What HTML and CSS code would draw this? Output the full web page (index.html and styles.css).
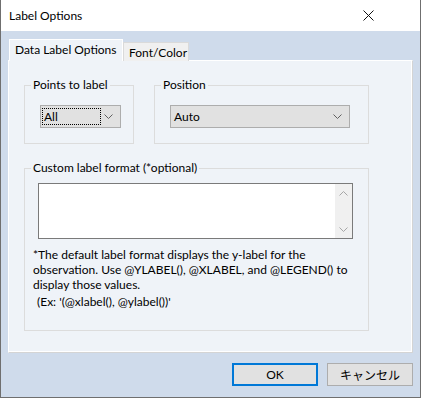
FILE: index.html
```html
<!DOCTYPE html>
<html lang="en">
<head>
    <meta charset="UTF-8">
    <title>Label Options</title>
    <link rel="stylesheet" href="styles.css">
</head>
<body>
    <div class="window">
        <div class="titlebar">
            <span class="title">Label Options</span>
            <svg class="close" width="11" height="11" viewBox="0 0 11 11">
                <path d="M0.5 0.5 L10.5 10.5 M10.5 0.5 L0.5 10.5" stroke="#111" stroke-width="1" fill="none"/>
            </svg>
        </div>

        <div class="client">
            <div class="tabs">
                <div class="tab active">Data Label Options</div>
                <div class="tab">Font/Color</div>
            </div>

            <div class="panel">
                <div class="row">
                    <fieldset class="group points">
                        <legend>Points to label</legend>
                        <div class="combo combo-points">
                            <span class="focus">All</span>
                            <svg class="chevron" width="9" height="5" viewBox="0 0 9 5">
                                <path d="M0.5 0.5 L4.5 4.5 L8.5 0.5" stroke="#606060" fill="none"/>
                            </svg>
                        </div>
                    </fieldset>

                    <fieldset class="group position">
                        <legend>Position</legend>
                        <div class="combo combo-position">
                            <span class="value">Auto</span>
                            <svg class="chevron" width="9" height="5" viewBox="0 0 9 5">
                                <path d="M0.5 0.5 L4.5 4.5 L8.5 0.5" stroke="#606060" fill="none"/>
                            </svg>
                        </div>
                    </fieldset>
                </div>

                <fieldset class="group custom">
                    <legend>Custom label format (*optional)</legend>
                    <div class="textbox">
                        <div class="scrollbar">
                            <svg width="9" height="5" viewBox="0 0 9 5">
                                <path d="M0.5 4.5 L4.5 0.5 L8.5 4.5" stroke="#a6a6a6" fill="none"/>
                            </svg>
                            <svg width="9" height="5" viewBox="0 0 9 5">
                                <path d="M0.5 0.5 L4.5 4.5 L8.5 0.5" stroke="#a6a6a6" fill="none"/>
                            </svg>
                        </div>
                    </div>
                    <p class="note">
                        *The default label format displays the y-label for the<br>
                        observation. Use @YLABEL(), @XLABEL, and @LEGEND() to<br>
                        display those values.
                    </p>
                    <p class="example">(Ex: '(@xlabel(), @ylabel())'</p>
                </fieldset>
            </div>

            <div class="buttons">
                <button class="btn default">OK</button>
                <button class="btn">キャンセル</button>
            </div>
        </div>
    </div>
</body>
</html>
```

FILE: styles.css
```css
body {
    margin: 0;
    padding: 0;
    background: #ffffff;
}

.window {
    width: 421px;
    height: 398px;
    box-sizing: border-box;
    border: 1px solid #6f6f6f;
    border-top: none;
    background-color: #cfdbeb;
    font-family: 'Lato', 'Noto Sans CJK JP', sans-serif;
    font-size: 12px;
    color: #000;
    display: flex;
    flex-direction: column;
}

.titlebar {
    height: 31px;
    background-color: #ffffff;
    display: flex;
    align-items: center;
    justify-content: space-between;
    padding-left: 8px;
}

.title {
    font-size: 12px;
}

.close {
    margin-right: 46px;
}

.client {
    flex: 1;
    padding: 9px 0 0 7px;
    display: flex;
    flex-direction: column;
}

.tabs {
    display: flex;
    align-items: flex-end;
    height: 21px;
    margin-left: 1px;
    margin-bottom: -1px;
    position: relative;
    z-index: 1;
}

.tab {
    box-sizing: border-box;
    height: 19px;
    width: 66px;
    padding-left: 5px;
    background-color: #f0f0f0;
    border: 1px solid #dadada;
    border-bottom: none;
    line-height: 19px;
}

.tab.active {
    height: 22px;
    width: 114px;
    background-color: #eff3f8;
    border-color: #ffffff;
    line-height: 19px;
}

.panel {
    box-sizing: border-box;
    width: 405px;
    height: 293px;
    background-color: #eff3f8;
    border: 1px solid #ffffff;
    border-right-color: #d4d4d4;
    border-bottom-color: #d4d4d4;
    box-shadow: inset -1px -1px 0 #ffffff;
    padding: 16px 0 0 15px;
}

.row {
    display: flex;
    gap: 20px;
}

.group {
    box-sizing: border-box;
    margin: 0;
    border: 1px solid #dcdcdc;
    padding: 12px 0 15px 15px;
}

.group legend {
    padding: 0 2px;
    margin-left: -9px;
    line-height: 16px;
}

.points {
    width: 110px;
}

.position {
    width: 215px;
}

.combo {
    box-sizing: border-box;
    height: 23px;
    background-color: #e1e1e1;
    border: 1px solid #adadad;
    display: flex;
    align-items: center;
    justify-content: space-between;
    padding: 0 7px 0 3px;
}

.combo-points {
    width: 81px;
    padding-left: 1px;
}

.combo-position {
    width: 180px;
}

.focus {
    box-sizing: border-box;
    width: 59px;
    height: 17px;
    border: 1px dotted #000;
    line-height: 15px;
    padding-left: 1px;
}

.custom {
    width: 345px;
    margin-top: 16px;
    padding: 7px 0 21px 8px;
}

.custom legend {
    margin-left: -2px;
}

.textbox {
    box-sizing: border-box;
    width: 315px;
    height: 56px;
    margin-left: 5px;
    background-color: #ffffff;
    border: 1px solid #7a7a7a;
    display: flex;
    justify-content: flex-end;
}

.scrollbar {
    width: 17px;
    background-color: #f0f0f0;
    display: flex;
    flex-direction: column;
    justify-content: space-between;
    align-items: center;
    padding: 7px 0 6px;
}

.note {
    margin: 8px 0 0;
    line-height: 15px;
}

.example {
    margin: 2px 0 0;
    padding-left: 4px;
    line-height: 15px;
}

.buttons {
    display: flex;
    justify-content: flex-end;
    gap: 9px;
    padding-right: 7px;
    margin-top: 10px;
}

.btn {
    box-sizing: border-box;
    width: 86px;
    height: 23px;
    background-color: #e1e1e1;
    border: 1px solid #adadad;
    font-family: 'Lato', 'Noto Sans CJK JP', sans-serif;
    font-size: 12px;
    color: #000;
    padding: 0;
}

.btn.default {
    border: 2px solid #0078d7;
}
```
